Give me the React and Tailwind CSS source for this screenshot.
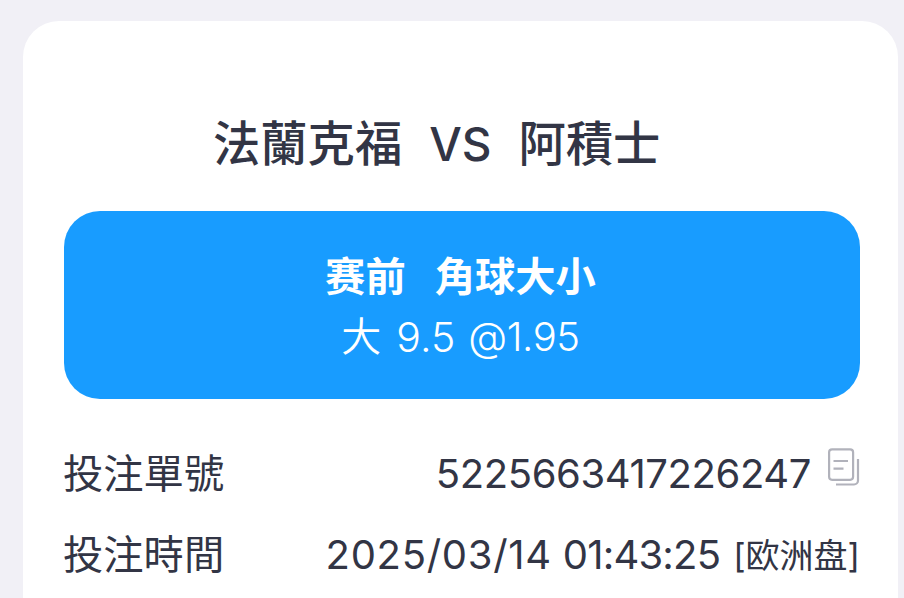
import React from "react";

function CopyIcon() {
  return (
    <svg width="32" height="38" viewBox="0 0 32 38" fill="none" stroke="#b1b2bb" strokeWidth="2.2">
      <rect x="1.100" y="1.300" width="24" height="30.500" rx="3" />
      <path d="M5.500 13H20M5.500 20.700H15.500" />
      <path d="M30 11v21.500a4 4 0 0 1-4 4H8" />
    </svg>
  );
}

function Row({ label, children }) {
  return (
    <div className="flex h-[81px] items-center justify-between whitespace-nowrap">
      <span className="-ml-px pt-px text-[40.300px] leading-none">{label}</span>
      <div className="flex items-center text-[40px] leading-none">{children}</div>
    </div>
  );
}

function App() {
  return (
    <div className="h-[598px] w-[904px] overflow-hidden bg-[#f1f0f6] pt-[21px] pl-[23px] font-['Inter','Noto_Sans_CJK_TC',sans-serif] text-[#323545]">
      <div className="h-[640px] w-[875px] rounded-[36px] bg-white pt-[91px] pr-[38px] pl-[41px]">
        {/* Teams */}
        <div className="flex h-[64px] items-center gap-[27px] pl-[149px] text-[47.300px] leading-none font-medium whitespace-nowrap">
          <span>法蘭克福</span>
          <span className="text-[46px]">VS</span>
          <span>阿積士</span>
        </div>

        {/* Selection */}
        <div className="mt-[35px] flex h-[188px] flex-col items-center rounded-[36px] bg-[#189cff] pt-[36px] pr-[3px] text-white">
          <div className="flex h-[60px] items-center gap-[29px] text-[40.300px] leading-none font-bold">
            <span className="font-['Inter','Noto_Sans_CJK_SC',sans-serif]">赛前</span>
            <span>角球大小</span>
          </div>
          <div className="flex h-[60px] items-center text-[40px] leading-none">
            <span className="font-[350]">大</span>
            <span className="ml-[15px] text-[41px] font-light">9.5</span>
            <span className="ml-[13px] font-light tracking-[-0.400px]">@1.95</span>
          </div>
        </div>

        {/* Ticket details */}
        <div className="mt-[34px]">
          <Row label="投注單號">
            <span className="tracking-[-0.400px]">5225663417226247</span>
            <span className="mb-[14px] ml-[17px]">
              <CopyIcon />
            </span>
          </Row>
          <Row label="投注時間">
            <span className="tracking-[0.700px]">2025/03/14</span>
            <span className="ml-[11px] tracking-[-0.800px]">01:43:25</span>
            <span className="ml-[13px] pt-[3px] font-['Inter','Noto_Sans_CJK_SC',sans-serif] text-[34px]">
              [欧洲盘]
            </span>
          </Row>
        </div>
      </div>
    </div>
  );
}

export default App;
